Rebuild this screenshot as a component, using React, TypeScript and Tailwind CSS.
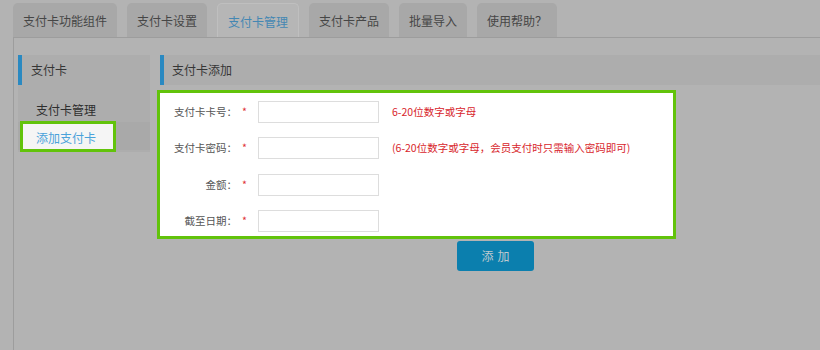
import React from "react";

const tabs = ["支付卡功能组件", "支付卡设置", "支付卡管理", "支付卡产品", "批量导入", "使用帮助？"];

const rows = [
  { label: "支付卡卡号：", hint: "6-20位数字或字母", mt: "mt-0" },
  { label: "支付卡密码：", hint: "(6-20位数字或字母，会员支付时只需输入密码即可)", mt: "mt-[14px]" },
  { label: "金额：", hint: "", mt: "mt-[15px]" },
  { label: "截至日期：", hint: "", mt: "mt-[14px]" },
];

export default function App() {
  return (
    <div className="w-[820px] h-[350px] overflow-hidden bg-[#b3b3b3] font-['Noto_Sans_CJK_SC',sans-serif]">
      {/* Tabs */}
      <div className="ml-[13px] h-[38px] pt-[3px] flex gap-[10px] border-b border-[#9d9d9d]">
        {tabs.map((t, i) => (
          <div
            key={t}
            className={
              i === 2
                ? "h-[34px] px-[10px] pt-[2px] flex items-center rounded-t-[5px] bg-[#b6b6b6] border border-b-0 border-[#bfbfbf] text-[12px] text-[#4487b3]"
                : "h-[34px] px-[10px] pt-[2px] flex items-center rounded-t-[5px] bg-[#a8a8a8] text-[12px] text-[#464646]"
            }
          >
            {t}
          </div>
        ))}
      </div>

      {/* Body */}
      <div className="ml-[13px] h-[312px] border-l border-[#9d9d9d] pl-[4px] pt-[17px] flex">
        {/* Sidebar */}
        <div className="w-[132px] shrink-0">
          <div className="h-[30px] bg-[#adadad] border-l-4 border-[#2a89c1] pl-[9px] flex items-center text-[12px] text-[#363636]">
            支付卡
          </div>
          <div className="bg-[#adadad] pt-[9px] pb-[2px]">
            <div className="h-[28px] pl-[18px] pt-[3px] flex items-center text-[12px] text-[#2e2e2e]">
              支付卡管理
            </div>
            <div className="relative h-[28px] bg-[#a9a9a9]">
              <div className="absolute left-[2px] top-[-1px] w-[96px] h-[31px] border-[3px] border-[#62c30b] bg-[#f5f5f5] pl-[13px] pt-[3px] flex items-center text-[12px] text-[#4aa2da]">
                添加支付卡
              </div>
            </div>
          </div>
        </div>

        {/* Main */}
        <div className="ml-[10px] flex-1">
          <div className="h-[30px] bg-[#adadad] border-l-4 border-[#2a89c1] pl-[8px] flex items-center text-[12px] text-[#363636]">
            支付卡添加
          </div>
          <div className="mt-[5px] -ml-[3px] w-[519px] h-[149px] border-[3px] border-[#62c30b] bg-white pt-[8px]">
            {rows.map((r) => (
              <div key={r.label} className={`flex items-center h-[22px] ${r.mt}`}>
                <div className="w-[87px] text-right text-[10.5px] text-[#555555] leading-none">
                  {r.label}
                  <span className="ml-[5px] text-[#e0313a]">*</span>
                </div>
                <div className="ml-[11px] w-[121px] h-[22px] border border-[#dddddd] bg-white shrink-0" />
                {r.hint && (
                  <div className="ml-[13px] text-[10.5px] text-[#d8262c] whitespace-nowrap">{r.hint}</div>
                )}
              </div>
            ))}
          </div>
          <div className="ml-[297px] mt-[2px] w-[77px] h-[30px] rounded-[3px] bg-[#0b7fae] flex items-center justify-center text-[12px] text-[#bfc9ce] tracking-[4px] pl-[4px]">
            添加
          </div>
        </div>
      </div>
    </div>
  );
}
